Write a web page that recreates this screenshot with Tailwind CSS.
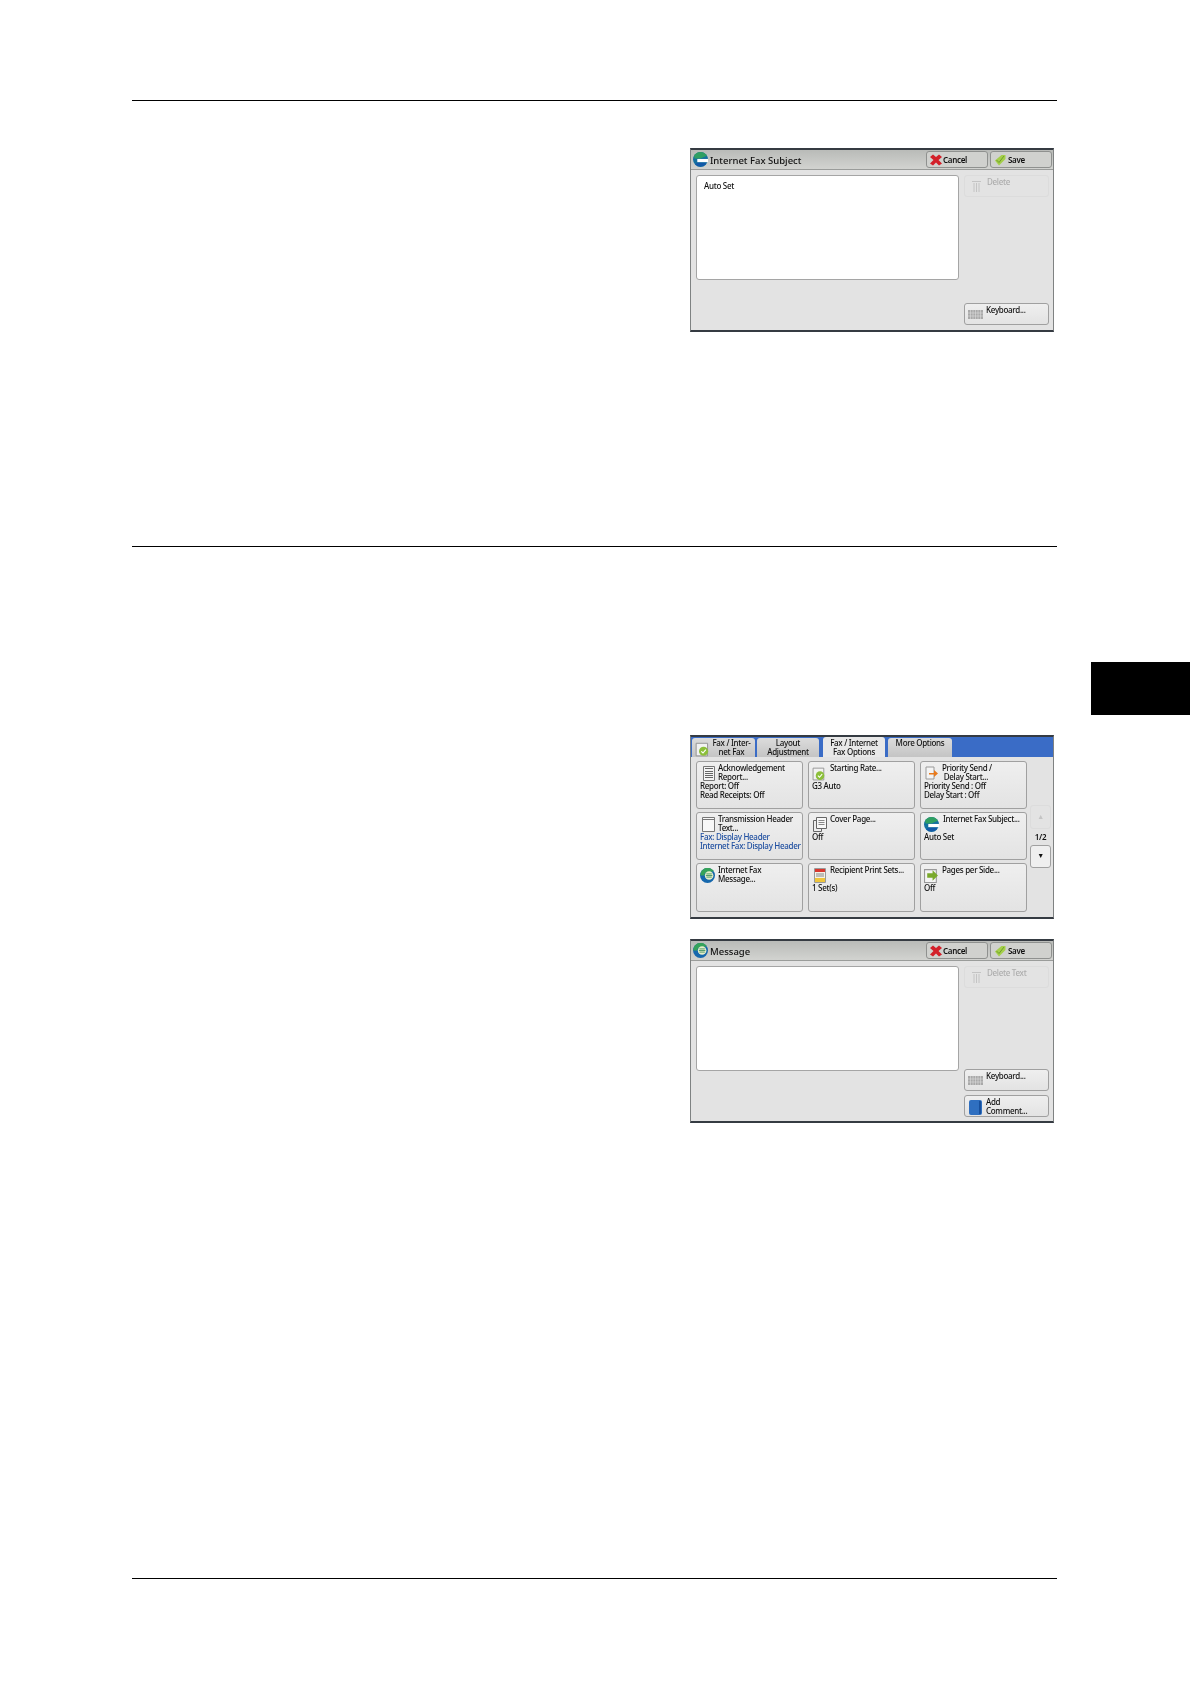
<!DOCTYPE html>
<html lang="en">
<head>
    <meta charset="UTF-8">
    <title>Internet Fax Options</title>
    <script src="https://cdn.jsdelivr.net/npm/@tailwindcss/browser@4"></script>
</head>
<body class="bg-white font-['Noto_Sans',sans-serif] text-[#111]">
    <!-- shared icons -->
    <svg class="hidden">
        <symbol id="globeSubject" viewBox="0 0 14 14">
            <circle cx="7" cy="7" r="7" fill="#14709f"/>
            <path d="M1 3.500A7 7 0 0 1 13 3.500L7 6H1.500z" fill="#2f9f62"/>
            <path d="M4 6.500h10v3H4z" fill="#fff"/>
            <path d="M2 11.500A7 7 0 0 0 12 11.500V10H4z" fill="#1259a8"/>
        </symbol>
        <symbol id="globeMessage" viewBox="0 0 14 14">
            <circle cx="7" cy="7" r="7" fill="#1668ad"/>
            <path d="M1 3.500A7 7 0 0 1 13 3L8 4A3.500 3.500 0 0 0 4 7H0.200z" fill="#35a35a"/>
            <circle cx="8.500" cy="7" r="4" fill="#e6efc8"/>
            <path d="M6 5.500h5M5.500 7h6M6 8.500h5" stroke="#3d8f5f" stroke-width=".8"/>
        </symbol>
        <symbol id="cancelX" viewBox="0 0 12 12">
            <path d="M0 3 3 .500l3 2.500 3-2.500L12 3 8.500 6 12 9.500 9 11.500 6 8.500 3 11.500 0 9.500 3.500 6z" fill="#d3202a"/>
        </symbol>
        <symbol id="saveCheck" viewBox="0 0 12 12">
            <path d="M1 6.500 7.500 1H11.500V5L5 11.500z" fill="#a4cf4a"/>
            <path d="M2.500 6 5 8.500 10 2" fill="none" stroke="#6f9f2a" stroke-width="1"/>
        </symbol>
        <symbol id="trash" viewBox="0 0 9 13">
            <path d="M0 1.500h9M2 3v9M4.500 3v9M7 3v9" stroke="#c4c4c4" fill="none"/>
        </symbol>
        <symbol id="keyboard" viewBox="0 0 15 9">
            <rect width="15" height="9" fill="#a9a9a9"/>
            <path d="M0 3h15M0 6h15M2.500 0v9M5 0v9M7.500 0v9M10 0v9M12.500 0v9" stroke="#e4e4e4" stroke-width=".5"/>
        </symbol>
        <symbol id="docCheck" viewBox="0 0 14 14">
            <path d="M1 2h10v11H1z" fill="#f2f2f2" stroke="#8e8e8e" stroke-width=".8"/>
            <circle cx="7.500" cy="9" r="4" fill="#8cbf3a"/>
            <path d="M5.500 9 7 10.500 9.500 7.500" stroke="#fff" fill="none"/>
        </symbol>
    </svg>

    <main class="w-[1190px] h-[1684px] relative overflow-hidden pl-[132px] pr-[133px] pt-[100px]">
        <div class="h-px bg-black"></div>

        <!-- Internet Fax Subject -->
        <div class="mt-[47px] mr-[3px] ml-auto w-[364px] h-[184px] border-x border-x-[#7f8282] border-y-2 border-y-[#353b42] bg-[#e3e3e3] blur-[0.4px] flex flex-col">
            <div class="h-[20px] shrink-0 flex items-center bg-gradient-to-b from-[#b9bbb8] to-[#d2d3d0] border-b border-[#9a9c9a] pl-[2px] pr-[1px]">
                <svg class="w-[15px] h-[15px]"><use href="#globeSubject"/></svg>
                <span class="ml-[2px] mt-[2px] text-[9.500px] font-medium leading-none">Internet Fax Subject</span>
                <div class="ml-auto flex gap-[2px]">
                    <div class="w-[62px] h-[17px] rounded-[3px] border border-[#8f918f] bg-[#d0d1ce] flex items-center pl-[3px] text-[8px] tracking-[-0.3px] font-semibold">
                        <svg class="w-[12px] h-[12px] mr-px"><use href="#cancelX"/></svg>Cancel
                    </div>
                    <div class="w-[62px] h-[17px] rounded-[3px] border border-[#8f918f] bg-[#d0d1ce] flex items-center pl-[3px] text-[8px] tracking-[-0.3px] font-semibold">
                        <svg class="w-[12px] h-[12px] mr-[2px]"><use href="#saveCheck"/></svg>Save
                    </div>
                </div>
            </div>
            <div class="flex-1 flex pt-[5px] pl-[5px] pr-[4px] pb-[5px]">
                <div class="w-[263px] h-[105px] bg-white border border-[#a5a5a5] rounded-[3px] pl-[7px] pt-[4px] text-[8px] tracking-[-0.3px] leading-[12px] font-medium">Auto Set</div>
                <div class="ml-[5px] w-[85px] flex flex-col justify-between">
                    <div class="h-[22px] rounded-[3px] border border-[#dcdcdc] flex pl-[7px] text-[8px] tracking-[-0.3px] leading-[11px] font-medium text-[#adadad]">
                        <svg class="w-[9px] h-[13px] mt-[4px] mr-[6px]"><use href="#trash"/></svg>Delete
                    </div>
                    <div class="h-[22px] rounded-[3px] border border-[#a0a0a0] bg-gradient-to-b from-[#efefef] to-[#e3e3e3] flex pl-[3px] pt-[1px] text-[8px] tracking-[-0.3px] leading-[10px] font-medium">
                        <svg class="w-[15px] h-[9px] mt-[5px] mr-[3px]"><use href="#keyboard"/></svg>Keyboard...
                    </div>
                </div>
            </div>
        </div>

        <div class="h-px bg-black mt-[214px]"></div>

        <!-- Fax / Internet Fax Options tab -->
        <div class="mt-[188px] mr-[3px] ml-auto w-[364px] h-[184px] border-x border-x-[#7f8282] border-y-2 border-y-[#353b42] bg-[#e3e3e3] blur-[0.4px] flex flex-col">
            <div class="h-[20px] shrink-0 bg-[#3a6cc6] flex items-end pl-[1px] text-[8px] tracking-[-0.3px] leading-[9px] font-medium text-center">
                <div class="w-[63px] h-[19px] rounded-t-[3px] bg-gradient-to-b from-[#dcdcdc] to-[#c4c4c4] flex items-center pl-[3px] pb-[2px]">
                    <svg class="w-[16px] h-[16px] mt-[4px] shrink-0"><use href="#docCheck"/></svg>
                    <span class="w-[41px]">Fax / Inter-<br>net Fax</span>
                </div>
                <div class="w-[62px] h-[19px] ml-[2px] pb-[2px] rounded-t-[3px] bg-gradient-to-b from-[#dcdcdc] to-[#c4c4c4] flex items-center justify-center">Layout<br>Adjustment</div>
                <div class="w-[62px] h-[20px] ml-[4px] pb-[1px] rounded-t-[3px] bg-[#e8e8e8] flex items-center justify-center">Fax / Internet<br>Fax Options</div>
                <div class="w-[64px] h-[19px] ml-[3px] rounded-t-[3px] bg-gradient-to-b from-[#dcdcdc] to-[#c4c4c4]">More Options</div>
            </div>
            <div class="flex-1 flex pt-[4px] pl-[5px]">
                <div class="grid grid-cols-[107px_107px_107px] grid-rows-[48px_48px_49px] gap-x-[5px] gap-y-[3px] text-[8px] tracking-[-0.3px] leading-[9px] font-medium">
                    <div class="rounded-[3px] border border-[#a0a0a0] bg-gradient-to-b from-[#efefef] to-[#e3e3e3] px-[3px] pt-px">
                        <div class="h-[18px] flex">
                            <svg class="w-[12px] h-[15px] mt-[3px] ml-[3px] mr-[3px] shrink-0" viewBox="0 0 12 15"><path d="M.5.500h11v14h-11z" fill="#f4f4f4" stroke="#777"/><path d="M2 2.500h8M2 5.500h8M2 7.500h8M2 9.500h8M2 11.500h8" stroke="#666"/></svg>
                            <span>Acknowledgement<br>Report...</span>
                        </div>
                        Report: Off<br>Read Receipts: Off
                    </div>
                    <div class="rounded-[3px] border border-[#a0a0a0] bg-gradient-to-b from-[#efefef] to-[#e3e3e3] px-[3px] pt-px">
                        <div class="h-[18px] flex">
                            <svg class="w-[15px] h-[15px] mt-[3px] mr-[3px] shrink-0"><use href="#docCheck"/></svg>
                            <span>Starting Rate...</span>
                        </div>
                        G3 Auto
                    </div>
                    <div class="rounded-[3px] border border-[#a0a0a0] bg-gradient-to-b from-[#efefef] to-[#e3e3e3] px-[3px] pt-px">
                        <div class="h-[18px] flex">
                            <svg class="w-[14px] h-[14px] mt-[3px] ml-px mr-[3px] shrink-0" viewBox="0 0 14 14"><path d="M1 1h8v12H1z" fill="#f4f4f4" stroke="#999"/><path d="M4 7h5V4l4 3.500-4 3.500V8.500H4z" fill="#e87a1d"/></svg>
                            <span>Priority Send /<br>&nbsp;Delay Start...</span>
                        </div>
                        Priority Send : Off<br>Delay Start : Off
                    </div>
                    <div class="rounded-[3px] border border-[#a0a0a0] bg-gradient-to-b from-[#efefef] to-[#e3e3e3] px-[3px] pt-px">
                        <div class="h-[18px] flex">
                            <svg class="w-[13px] h-[15px] mt-[3px] mr-[3px] ml-[2px] shrink-0" viewBox="0 0 13 15"><path d="M.5.500h12v14H.5z" fill="#f8f8f8" stroke="#777"/><path d="M.5 2.500h12" stroke="#777"/></svg>
                            <span>Transmission Header<br>Text...</span>
                        </div>
                        <span class="text-[#1f4fa0] whitespace-nowrap">Fax: Display Header<br>Internet Fax: Display Header</span>
                    </div>
                    <div class="rounded-[3px] border border-[#a0a0a0] bg-gradient-to-b from-[#efefef] to-[#e3e3e3] px-[3px] pt-px">
                        <div class="h-[18px] flex">
                            <svg class="w-[14px] h-[15px] mt-[3px] ml-px mr-[3px] shrink-0" viewBox="0 0 14 15"><path d="M.5 3.500h8v11h-8z" fill="#eee" stroke="#666"/><path d="M3.500.500h10v11h-10z" fill="#f8f8f8" stroke="#666"/><path d="M5.500 3.500h6M5.500 5.500h6M5.500 7.500h6" stroke="#888"/></svg>
                            <span>Cover Page...</span>
                        </div>
                        Off
                    </div>
                    <div class="rounded-[3px] border border-[#a0a0a0] bg-gradient-to-b from-[#efefef] to-[#e3e3e3] px-[3px] pt-px">
                        <div class="h-[18px] flex">
                            <svg class="w-[15px] h-[15px] mt-[3px] mr-[4px] shrink-0"><use href="#globeSubject"/></svg>
                            <span class="whitespace-nowrap">Internet Fax Subject...</span>
                        </div>
                        Auto Set
                    </div>
                    <div class="rounded-[3px] border border-[#a0a0a0] bg-gradient-to-b from-[#efefef] to-[#e3e3e3] px-[3px] pt-px">
                        <div class="h-[18px] flex">
                            <svg class="w-[15px] h-[15px] mt-[3px] mr-[3px] shrink-0"><use href="#globeMessage"/></svg>
                            <span>Internet Fax<br>Message...</span>
                        </div>
                    </div>
                    <div class="rounded-[3px] border border-[#a0a0a0] bg-gradient-to-b from-[#efefef] to-[#e3e3e3] px-[3px] pt-px">
                        <div class="h-[18px] flex">
                            <svg class="w-[12px] h-[15px] mt-[3px] ml-[2px] mr-[4px] shrink-0" viewBox="0 0 12 15"><path d="M.5.500h11v14H.5z" fill="#f4f1e6" stroke="#999"/><path d="M1 1h10v3H1z" fill="#d9382e"/><path d="M2 6h8M2 8h8" stroke="#888"/><path d="M1 10h10v4H1z" fill="#efc53c"/></svg>
                            <span>Recipient Print Sets...</span>
                        </div>
                        1 Set(s)
                    </div>
                    <div class="rounded-[3px] border border-[#a0a0a0] bg-gradient-to-b from-[#efefef] to-[#e3e3e3] px-[3px] pt-px">
                        <div class="h-[18px] flex">
                            <svg class="w-[15px] h-[15px] mt-[3px] mr-[3px] shrink-0" viewBox="0 0 14 14"><path d="M.5 1.500h11v12H.5z" fill="#f4f4f4" stroke="#999"/><path d="M3 5h5V2l5 5-5 5V9H3z" fill="#7aa92c"/></svg>
                            <span>Pages per Side...</span>
                        </div>
                        Off
                    </div>
                </div>
                <div class="ml-[3px] w-[21px] pt-[44px] flex flex-col text-center text-[8px] tracking-[-0.3px] font-semibold">
                    <div class="h-[24px] rounded-[3px] border border-[#dcdcdc] flex items-center justify-center text-[7px] text-[#c4c4c4]">▲</div>
                    <div class="h-[16px] leading-[16px]">1/2</div>
                    <div class="h-[23px] rounded-[3px] border border-[#a0a0a0] bg-[#efefef] flex items-center justify-center text-[7px]">▼</div>
                </div>
            </div>
        </div>

        <!-- Message -->
        <div class="mt-[20px] mr-[3px] ml-auto w-[364px] h-[184px] border-x border-x-[#7f8282] border-y-2 border-y-[#353b42] bg-[#e3e3e3] blur-[0.4px] flex flex-col">
            <div class="h-[20px] shrink-0 flex items-center bg-gradient-to-b from-[#b9bbb8] to-[#d2d3d0] border-b border-[#9a9c9a] pl-[2px] pr-[1px]">
                <svg class="w-[15px] h-[15px]"><use href="#globeMessage"/></svg>
                <span class="ml-[2px] mt-[2px] text-[9.500px] font-medium leading-none">Message</span>
                <div class="ml-auto flex gap-[2px]">
                    <div class="w-[62px] h-[17px] rounded-[3px] border border-[#8f918f] bg-[#d0d1ce] flex items-center pl-[3px] text-[8px] tracking-[-0.3px] font-semibold">
                        <svg class="w-[12px] h-[12px] mr-px"><use href="#cancelX"/></svg>Cancel
                    </div>
                    <div class="w-[62px] h-[17px] rounded-[3px] border border-[#8f918f] bg-[#d0d1ce] flex items-center pl-[3px] text-[8px] tracking-[-0.3px] font-semibold">
                        <svg class="w-[12px] h-[12px] mr-[2px]"><use href="#saveCheck"/></svg>Save
                    </div>
                </div>
            </div>
            <div class="flex-1 flex pt-[5px] pl-[5px] pr-[4px] pb-[4px]">
                <div class="w-[263px] h-[105px] bg-white border border-[#a5a5a5] rounded-[3px]"></div>
                <div class="ml-[5px] w-[85px] flex flex-col">
                    <div class="h-[22px] rounded-[3px] border border-[#dcdcdc] flex pl-[7px] text-[8px] tracking-[-0.3px] leading-[11px] font-medium text-[#adadad]">
                        <svg class="w-[9px] h-[13px] mt-[4px] mr-[6px]"><use href="#trash"/></svg>Delete Text
                    </div>
                    <div class="mt-auto h-[22px] rounded-[3px] border border-[#a0a0a0] bg-gradient-to-b from-[#efefef] to-[#e3e3e3] flex pl-[3px] pt-[1px] text-[8px] tracking-[-0.3px] leading-[10px] font-medium">
                        <svg class="w-[15px] h-[9px] mt-[5px] mr-[3px]"><use href="#keyboard"/></svg>Keyboard...
                    </div>
                    <div class="mt-[4px] h-[22px] rounded-[3px] border border-[#a0a0a0] bg-gradient-to-b from-[#efefef] to-[#e3e3e3] flex pl-[4px] pt-[1px] text-[8px] tracking-[-0.3px] leading-[9px] font-medium">
                        <svg class="w-[13px] h-[15px] mt-[3px] mr-[4px] shrink-0" viewBox="0 0 13 15"><path d="M2 0h9a2 2 0 0 1 2 2v11a2 2 0 0 1-2 2H2a2 2 0 0 1-2-2V2a2 2 0 0 1 2-2z" fill="#2f6fc0"/><path d="M10 1h2v13h-2z" fill="#174f9c"/></svg>
                        <span>Add<br>Comment...</span>
                    </div>
                </div>
            </div>
        </div>

        <div class="h-px bg-black mt-[455px]"></div>

        <!-- chapter thumb tab -->
        <div class="absolute right-0 top-[662px] w-[99px] h-[53px] bg-black"></div>
    </main>
</body>
</html>
